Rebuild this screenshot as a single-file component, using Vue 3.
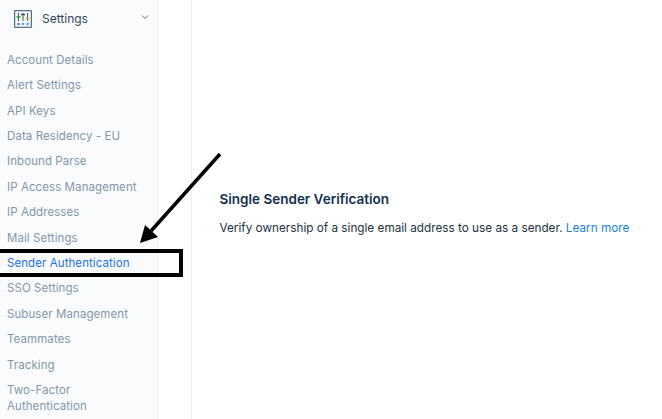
<template>
  <div class="page">
    <aside class="sidebar">
      <div class="settings-head">
        <svg class="settings-icon" width="18" height="18" viewBox="0 0 18 18">
          <rect x="0.600" y="0.600" width="16.800" height="16.800" rx="0.500" fill="#f4f6f8" stroke="#5a6f84" stroke-width="1.200" />
          <path d="M4.500 3v8M9 3v8M13.500 3v8" stroke="#33475b" stroke-width="0.900" fill="none" />
          <path d="M2.500 7h4" stroke="#2fa84f" stroke-width="1.600" />
          <path d="M7 4.500h4" stroke="#33475b" stroke-width="1.400" />
          <path d="M11.500 8.500h4" stroke="#b9c22c" stroke-width="1.600" />
          <circle cx="4.500" cy="14" r="1.300" fill="#5f74d6" />
          <circle cx="9" cy="14" r="1.300" fill="#6f9fe0" />
          <circle cx="13.500" cy="14" r="1.300" fill="#35b4d8" />
        </svg>
        <span class="settings-title">Settings</span>
        <svg class="chevron" width="8" height="6" viewBox="0 0 8 6">
          <path d="M1 1.500l3 3 3-3" fill="none" stroke="#546b81" stroke-width="1" />
        </svg>
      </div>
      <nav class="nav">
        <a v-for="item in items" :key="item" :class="['nav-item', { active: item === activeItem }]">{{ item }}</a>
      </nav>
    </aside>
    <div class="gutter"></div>
    <main class="content">
      <h2>Single Sender Verification</h2>
      <p>Verify ownership of a single email address to use as a sender. <a class="learn">Learn more</a></p>
    </main>

    <!-- annotation drawn on top of the screenshot -->
    <div class="callout-box"></div>
    <svg class="callout-arrow" width="100" height="110" viewBox="0 0 100 110">
      <path d="M81 14L12 91" stroke="#000" stroke-width="3.500" fill="none" />
      <path d="M1 103L6 85L19 97Z" fill="#000" />
    </svg>
  </div>
</template>

<script setup>
const activeItem = 'Sender Authentication'
const items = [
  'Account Details',
  'Alert Settings',
  'API Keys',
  'Data Residency - EU',
  'Inbound Parse',
  'IP Access Management',
  'IP Addresses',
  'Mail Settings',
  'Sender Authentication',
  'SSO Settings',
  'Subuser Management',
  'Teammates',
  'Tracking',
  'Two-Factor Authentication'
]
</script>

<style>
html, body {
  margin: 0;
  background: #fff;
  overflow: hidden;
}
</style>

<style scoped>
.page {
  position: relative;
  display: flex;
  width: 662px;
  height: 419px;
  overflow: hidden;
  background: #fff;
  font-family: Inter, "Open Sans", sans-serif;
}

.sidebar {
  width: 158px;
  flex-shrink: 0;
  background: #fafbfc;
  border-right: 1px solid #eef1f4;
  box-sizing: border-box;
}

.settings-head {
  display: flex;
  align-items: center;
  height: 37px;
  padding: 0 8px 0 14px;
}

.settings-title {
  margin-left: 10px;
  font-size: 12px;
  letter-spacing: 0;
  color: #33475b;
}

.chevron {
  margin-left: auto;
  margin-top: -3px;
}

.nav {
  display: flex;
  flex-direction: column;
  padding-top: 10.200px;
}

.nav-item {
  padding: 4.500px 7px;
  font-size: 11.500px;
  line-height: 16.400px;
  letter-spacing: 0.08px;
  color: #8497a8;
}

.nav-item.active {
  color: #1a73e8;
}

.gutter {
  width: 33px;
  flex-shrink: 0;
  border-right: 1px solid #eef1f4;
}

.content {
  padding: 190px 0 0 27.500px;
  white-space: nowrap;
}

h2 {
  margin: 0;
  font-size: 13.500px;
  line-height: 18px;
  font-weight: 600;
  color: #12304f;
}

p {
  margin: 11px 0 0;
  font-size: 11.750px;
  line-height: 18px;
  color: #24323f;
}

.learn {
  color: #1a82e2;
}

.callout-box {
  position: absolute;
  left: -4px;
  top: 249px;
  width: 187px;
  height: 28px;
  box-sizing: border-box;
  border: 4px solid #000;
}

.callout-arrow {
  position: absolute;
  left: 139px;
  top: 140px;
}
</style>
